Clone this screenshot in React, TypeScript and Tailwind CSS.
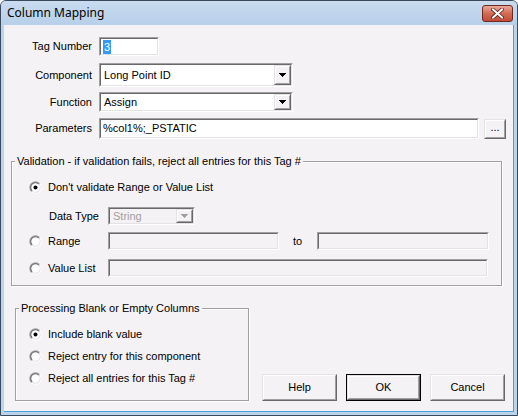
import React from 'react';

const BG = 'bg-[#f5f2f5]';

const Sunken = ({ className = '', disabled = false, children }: { className?: string; disabled?: boolean; children?: React.ReactNode }) => (
  <div className={`border border-t-[#a0a0a0] border-l-[#a0a0a0] border-b-white border-r-white ${className}`}>
    <div className={`flex h-full w-full items-center border border-t-[#696969] border-l-[#696969] border-b-[#e3e3e3] border-r-[#e3e3e3] ${disabled ? BG : 'bg-white'}`}>
      {children}
    </div>
  </div>
);

const Raised = ({ className = '', children }: { className?: string; children?: React.ReactNode }) => (
  <div className={`border border-t-[#e3e3e3] border-l-[#e3e3e3] border-b-[#696969] border-r-[#696969] ${className}`}>
    <div className={`flex h-full w-full items-center justify-center border border-t-white border-l-white border-b-[#a0a0a0] border-r-[#a0a0a0] ${BG}`}>
      {children}
    </div>
  </div>
);

const Arrow = ({ disabled = false }: { disabled?: boolean }) => (
  <svg width="7" height="4" viewBox="0 0 7 4" shapeRendering="crispEdges">
    <path d="M0 0h7v1H0zM1 1h5v1H1zM2 2h3v1H2zM3 3h1v1H3z" fill={disabled ? '#a0a0a0' : '#000'} />
  </svg>
);

const Combo = ({ className, text, disabled = false }: { className: string; text: string; disabled?: boolean }) => (
  <Sunken className={className} disabled={disabled}>
    <span className={`flex-1 pl-[3px] ${disabled ? 'text-[#a0a0a0]' : 'text-black'}`}>{text}</span>
    <Raised className="h-full w-[17px]">
      <Arrow disabled={disabled} />
    </Raised>
  </Sunken>
);

const Radio = ({ checked = false }: { checked?: boolean }) => (
  <svg width="13" height="13" viewBox="0 0 13 13" className="shrink-0">
    <defs>
      <linearGradient id="rOuter" x1="0" y1="0" x2="1" y2="1">
        <stop offset="0.45" stopColor="#a0a0a0" />
        <stop offset="0.55" stopColor="#ffffff" />
      </linearGradient>
      <linearGradient id="rInner" x1="0" y1="0" x2="1" y2="1">
        <stop offset="0.45" stopColor="#696969" />
        <stop offset="0.55" stopColor="#e3e3e3" />
      </linearGradient>
    </defs>
    <circle cx="6.5" cy="6.5" r="6.2" fill="url(#rOuter)" />
    <circle cx="6.5" cy="6.5" r="5.2" fill="url(#rInner)" />
    <circle cx="6.5" cy="6.5" r="4.2" fill="#ffffff" />
    {checked && <circle cx="6.5" cy="6.5" r="2" fill="#000" />}
  </svg>
);

const RadioRow = ({ label, checked = false, className = '' }: { label: string; checked?: boolean; className?: string }) => (
  <div className={`flex h-[16px] items-center ${className}`}>
    <Radio checked={checked} />
    <span className="ml-[6px]">{label}</span>
  </div>
);

const Btn = ({ label, isDefault = false }: { label: string; isDefault?: boolean }) =>
  isDefault ? (
    <div className="h-[27px] w-[75px] border border-black">
      <Raised className="h-full w-full">{label}</Raised>
    </div>
  ) : (
    <Raised className="h-[27px] w-[75px]">{label}</Raised>
  );

const Caption = ({ text }: { text: string }) => (
  <div className={`-mt-[7px] ml-[3px] w-fit px-[2px] leading-[13px] ${BG}`}>{text}</div>
);

export default function App() {
  return (
    <div className="flex h-[416px] w-[518px] flex-col rounded-t-[6px] border border-[#3b4a5e] bg-[#bcd3ec] font-['Liberation_Sans',Arial,sans-serif] text-[11px] text-black">
      {/* title bar */}
      <div className="flex h-[24px] shrink-0 items-center justify-between rounded-t-[5px] bg-linear-to-b from-[#c9dbef] to-[#b7cfe9] pl-[6px] pr-[4px]">
        <span className="font-['Noto_Sans',sans-serif] text-[12px] leading-none">Column Mapping</span>
        <div className="flex h-[17px] w-[31px] items-center justify-center rounded-[3px] border border-[#6b2a22] bg-linear-to-b from-[#e8a89a] via-[#d46a55] to-[#c24b35]">
          <svg width="13" height="11" viewBox="0 0 13 11">
            <path d="M2 1.5l9 8M11 1.5l-9 8" stroke="#5b2018" strokeWidth="3.6" strokeLinecap="square" />
            <path d="M2 1.5l9 8M11 1.5l-9 8" stroke="#ffffff" strokeWidth="2" strokeLinecap="square" />
          </svg>
        </div>
      </div>

      {/* client area */}
      <div className={`mx-[3px] mb-[3px] flex flex-1 flex-col border-r border-b border-[#4aa3df] ${BG}`}>
        <div className="mt-[12px] flex h-[19px] items-center">
          <span className="w-[88px] text-right">Tag Number</span>
          <Sunken className="ml-[7px] h-[19px] w-[60px]">
            <span className="ml-[2px] bg-[#3399ff] px-[1px] leading-[14px] text-white">3</span>
          </Sunken>
        </div>
        <div className="mt-[7px] flex h-[24px] items-center">
          <span className="w-[88px] text-right">Component</span>
          <Combo className="ml-[7px] h-[24px] w-[194px]" text="Long Point ID" />
        </div>
        <div className="mt-[5px] flex h-[20px] items-center">
          <span className="w-[88px] text-right">Function</span>
          <Combo className="ml-[7px] h-[20px] w-[194px]" text="Assign" />
        </div>
        <div className="mt-[6px] flex h-[21px] items-center">
          <span className="w-[88px] text-right">Parameters</span>
          <Sunken className="ml-[7px] h-[21px] w-[380px]">
            <span className="pl-[2px]">%col1%;_PSTATIC</span>
          </Sunken>
          <Raised className="ml-[5px] h-[20px] w-[22px]">
            <span className="-mt-[3px]">...</span>
          </Raised>
        </div>

        {/* validation group */}
        <div className="ml-[7px] mr-[11px] mt-[22px] flex flex-col border border-[#a0a0a0] pb-[8px] shadow-[inset_1px_1px_0_#ffffff,1px_1px_0_#ffffff]">
          <Caption text="Validation - if validation fails, reject all entries for this Tag #" />
          <RadioRow className="ml-[17px] mt-[11px]" label="Don't validate Range or Value List" checked />
          <div className="mt-[12px] flex h-[18px] items-center">
            <span className="ml-[37px] w-[59px]">Data Type</span>
            <Combo className="h-[18px] w-[87px]" text="String" disabled />
          </div>
          <div className="mt-[7px] flex h-[18px] items-center">
            <RadioRow className="ml-[17px] w-[79px]" label="Range" />
            <Sunken className="h-[18px] w-[171px]" disabled />
            <span className="ml-[14px] w-[24px]">to</span>
            <Sunken className="h-[18px] w-[172px]" disabled />
          </div>
          <div className="mt-[9px] flex h-[18px] items-center">
            <RadioRow className="ml-[17px] w-[79px]" label="Value List" />
            <Sunken className="h-[18px] w-[380px]" disabled />
          </div>
        </div>

        {/* bottom row */}
        <div className="mt-[22px] flex items-end">
          <div className="ml-[11px] flex w-[234px] flex-col border border-[#a0a0a0] pb-[14px] shadow-[inset_1px_1px_0_#ffffff,1px_1px_0_#ffffff]">
            <Caption text="Processing Blank or Empty Columns" />
            <RadioRow className="ml-[13px] mt-[11px]" label="Include blank value" checked />
            <RadioRow className="ml-[13px] mt-[6px]" label="Reject entry for this component" />
            <RadioRow className="ml-[13px] mt-[6px]" label="Reject all entries for this Tag #" />
          </div>
          <div className="ml-[13px] flex gap-[9px]">
            <Btn label="Help" />
            <Btn label="OK" isDefault />
            <Btn label="Cancel" />
          </div>
        </div>
      </div>
    </div>
  );
}
